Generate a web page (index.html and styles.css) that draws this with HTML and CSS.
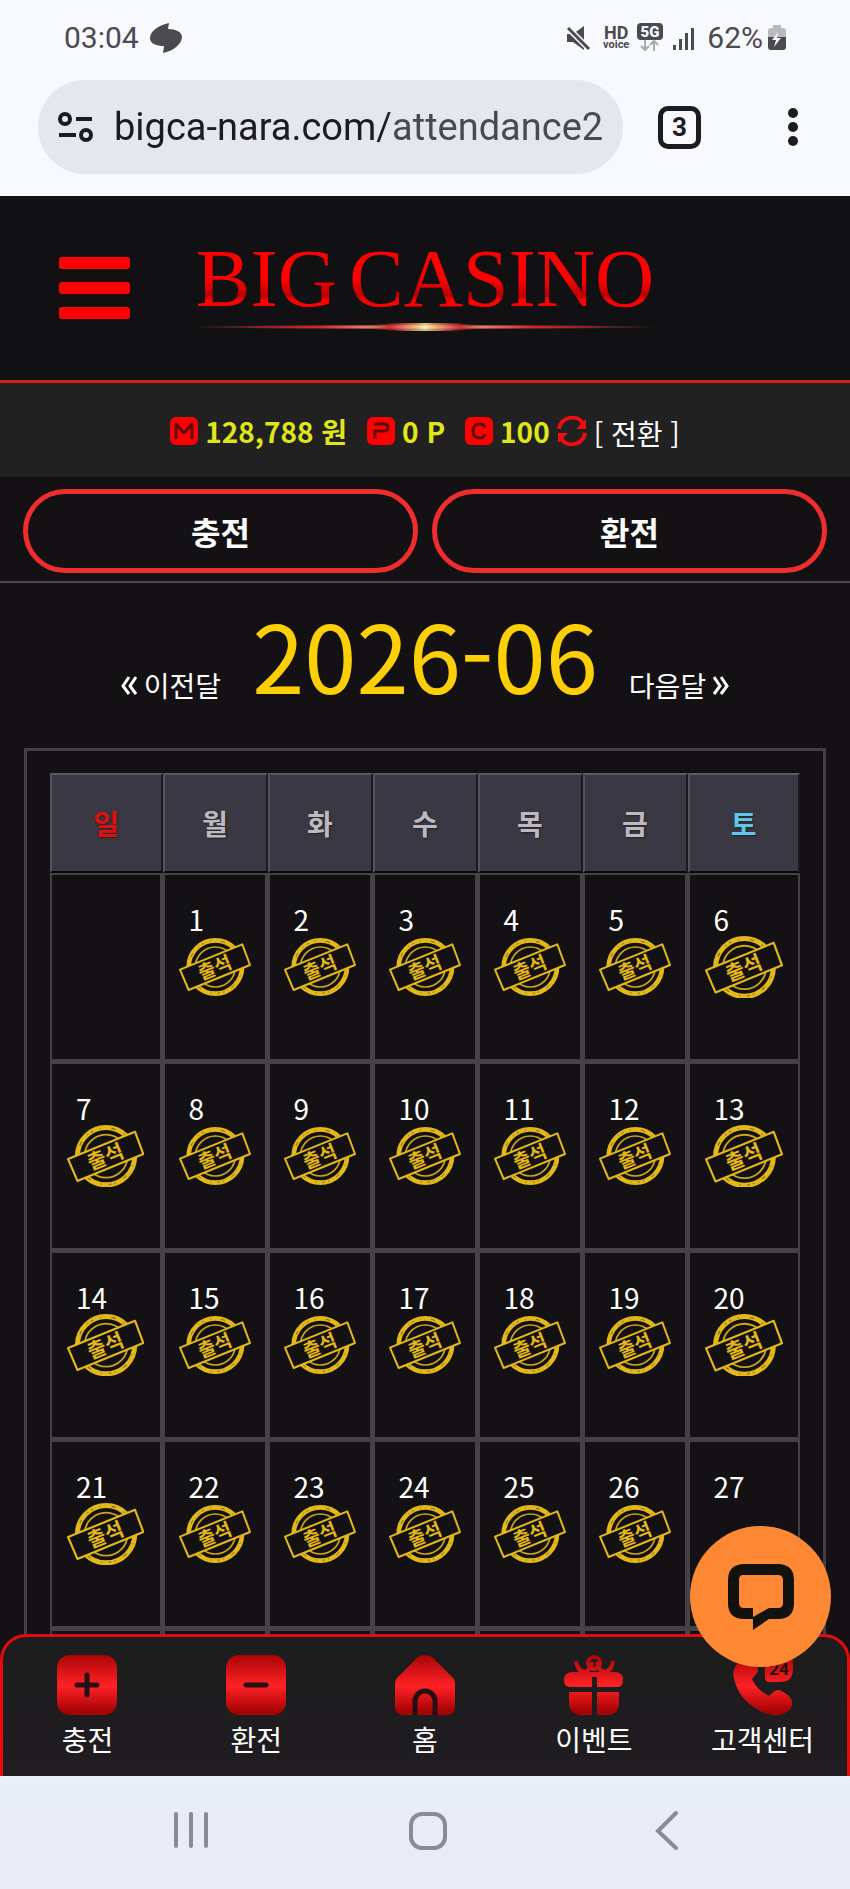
FILE: index.html
```html
<!DOCTYPE html>
<html lang="ko">
<head>
<meta charset="utf-8">
<meta name="viewport" content="width=device-width, initial-scale=1">
<title>BIG CASINO</title>
<link rel="stylesheet" href="styles.css">
</head>
<body>
<svg class="defs" aria-hidden="true">
  <defs>
    <linearGradient id="red" gradientUnits="userSpaceOnUse" x1="0" y1="0" x2="0" y2="60">
      <stop offset="0" stop-color="#a90506"/><stop offset=".52" stop-color="#ff2226"/><stop offset=".95" stop-color="#a50204"/>
    </linearGradient>
    <symbol id="stamp" viewBox="0 0 216 174">
      <circle cx="109" cy="87" r="80" fill="none" stroke="#e3b81a" stroke-width="14"/>
      <circle cx="109" cy="87" r="79" fill="none" stroke="#7d6616" stroke-width="3" stroke-dasharray="7 19 3 31 12 24 4 9"/>
      <circle cx="109" cy="87" r="60" fill="none" stroke="#cda51b" stroke-width="5"/>
      <path d="M3 95 190 19 213 81 29 156Z" fill="#131113" stroke="#e3b81a" stroke-width="6" stroke-linejoin="round"/>
      <text x="107" y="108" transform="rotate(-22 109 87)" text-anchor="middle" class="stamp-text">출석</text>
    </symbol>
  </defs>
</svg>

<div class="phone">
  <header class="status">
    <div class="clock">
      <span>03:04</span>
      <svg width="32" height="30" viewBox="0 0 32 30" fill="#4b4a51"><path d="M19 0C9 2 0 8 0 15c0 6 7 8 14 8l-1 7c10-2 19-9 19-16 0-5-6-8-14-8z"/></svg>
    </div>
    <div class="signals">
      <svg width="24" height="32" viewBox="0 0 24 32" fill="#4b4a51"><path d="M0 12h6l11-8v24L6 20H0z"/><path d="M0 5 23 28" stroke="#f8f8ff" stroke-width="6"/><path d="M1 6 22 27" stroke="#4b4a51" stroke-width="3"/></svg>
      <span class="hd-voice"><b>HD</b><small>voice</small></span>
      <svg width="58" height="32" viewBox="0 0 58 32" fill="#4b4a51">
        <rect width="26" height="17" y="1" rx="4"/>
        <text x="13" y="15" class="five" text-anchor="middle">5G</text>
        <path d="M8 18v10m-4-4 4 4 4-4M17 29V19m-4 4 4-4 4 4" fill="none" stroke="#a9a9b0" stroke-width="2"/>
        <path d="M36 23h3v5h-3zM42 17h3v11h-3zM48 11h3v17h-3zM54 6h3v22h-3z"/>
      </svg>
      <span class="percent">62%</span>
      <svg width="18" height="26" viewBox="0 0 18 26"><path d="M5 0h8v3h2q3 0 3 3v7H0V6q0-3 3-3h2z" fill="#b9b9c0"/><path d="M0 12h18v10q0 3-3 3H3q-3 0-3-3z" fill="#4b4a51"/><path d="M10 7 4 15h4l-2 7 7-9H9z" fill="#f8f8ff"/></svg>
    </div>
  </header>

  <div class="browser">
    <div class="address">
      <svg width="36" height="30" viewBox="0 0 36 30" fill="none" stroke="#1b1b20" stroke-width="4"><circle cx="7" cy="7" r="5"/><path d="M18 7h16M1 23h17"/><circle cx="28" cy="23" r="5"/></svg>
      <input class="url" aria-label="URL" value="bigca-nara.com/attendance2">
    </div>
    <button class="tabs" aria-label="Tabs">3</button>
    <button class="more" aria-label="Menu"><svg width="10" height="38" viewBox="0 0 10 38" fill="#1b1b20"><circle cx="5" cy="5" r="5"/><circle cx="5" cy="19" r="5"/><circle cx="5" cy="33" r="5"/></svg></button>
  </div>

  <div class="page">
    <div class="scroll">
      <header class="site-header">
        <button class="menu" aria-label="메뉴"><i></i><i></i><i></i></button>
        <a class="logo" href="#">
          <span class="logo-text"><span>BIG</span><span>CASINO</span></span>
          <svg viewBox="0 0 460 12" aria-hidden="true">
            <defs>
              <linearGradient id="line"><stop offset="0" stop-color="#8a4444" stop-opacity="0"/><stop offset=".2" stop-color="#b81c20"/><stop offset=".33" stop-color="#ec6a62"/><stop offset=".42" stop-color="#f0b070"/><stop offset=".5" stop-color="#fff0b8"/><stop offset=".58" stop-color="#f0b070"/><stop offset=".67" stop-color="#ec6a62"/><stop offset=".8" stop-color="#b81c20"/><stop offset="1" stop-color="#8a4444" stop-opacity="0"/></linearGradient>
            </defs>
            <rect y="5" width="460" height="2" fill="url(#line)"/>
            <rect x="50" y="4" width="360" height="4" fill="url(#line)" opacity=".6"/>
            <ellipse cx="230" cy="6" rx="60" ry="4" fill="url(#line)" opacity=".8"/>
          </svg>
        </a>
      </header>

      <div class="balance">
        <svg class="badge" viewBox="0 0 28 28"><rect width="28" height="28" rx="6" fill="#f00"/><path d="M6 22V7l8 9 8-9v15" fill="none" stroke="#5c0c0c" stroke-width="3" stroke-linejoin="round"/></svg>
        <b class="won">128,788 원</b>
        <svg class="badge" viewBox="0 0 28 28"><rect width="28" height="28" rx="6" fill="#f00"/><path d="M8 22V14h9q4 0 4-4 0-3-4-3H7" fill="none" stroke="#5c0c0c" stroke-width="3"/></svg>
        <b class="won">0 P</b>
        <svg class="badge" viewBox="0 0 28 28"><rect width="28" height="28" rx="6" fill="#f00"/><path d="M20 11q-1-4-5-4-7 0-7 7t7 7q4 0 5-4" fill="none" stroke="#5c0c0c" stroke-width="3"/></svg>
        <b class="coin">100</b>
        <svg class="refresh" viewBox="0 0 30 30" fill="none" stroke="#ee0d10" stroke-width="4"><path d="M2 13C4 0 22-2 26 8M28 17C26 30 8 32 4 22"/><path d="M29 3v10h-10zM1 27v-10h10z" fill="#ee0d10" stroke="none"/></svg>
        <a class="convert" href="#">[ 전환 ]</a>
      </div>

      <div class="cash">
        <button>충전</button>
        <button>환전</button>
      </div>

      <div class="month">
        <a href="#"><svg width="16" height="20" viewBox="0 0 16 20"><path d="M8 2 2 11l6 8M15 2 9 11l6 8"/></svg>이전달</a>
        <h1>2026-06</h1>
        <a href="#">다음달<svg width="16" height="20" viewBox="0 0 16 20"><path d="m1 2 6 9-6 8M8 2l6 9-6 8"/></svg></a>
      </div>

      <div class="box">
        <table class="calendar">
          <thead>
            <tr><th class="sun">일</th><th>월</th><th>화</th><th>수</th><th>목</th><th>금</th><th class="sat">토</th></tr>
          </thead>
          <tbody>
            <tr>
              <td></td>
              <td><div class="day"><span>1</span><svg viewBox="0 0 216 174"><use href="#stamp"/></svg></div></td>
              <td><div class="day"><span>2</span><svg viewBox="0 0 216 174"><use href="#stamp"/></svg></div></td>
              <td><div class="day"><span>3</span><svg viewBox="0 0 216 174"><use href="#stamp"/></svg></div></td>
              <td><div class="day"><span>4</span><svg viewBox="0 0 216 174"><use href="#stamp"/></svg></div></td>
              <td><div class="day"><span>5</span><svg viewBox="0 0 216 174"><use href="#stamp"/></svg></div></td>
              <td><div class="day"><span>6</span><svg viewBox="0 0 216 174"><use href="#stamp"/></svg></div></td>
            </tr>
            <tr>
              <td><div class="day"><span>7</span><svg viewBox="0 0 216 174"><use href="#stamp"/></svg></div></td>
              <td><div class="day"><span>8</span><svg viewBox="0 0 216 174"><use href="#stamp"/></svg></div></td>
              <td><div class="day"><span>9</span><svg viewBox="0 0 216 174"><use href="#stamp"/></svg></div></td>
              <td><div class="day"><span>10</span><svg viewBox="0 0 216 174"><use href="#stamp"/></svg></div></td>
              <td><div class="day"><span>11</span><svg viewBox="0 0 216 174"><use href="#stamp"/></svg></div></td>
              <td><div class="day"><span>12</span><svg viewBox="0 0 216 174"><use href="#stamp"/></svg></div></td>
              <td><div class="day"><span>13</span><svg viewBox="0 0 216 174"><use href="#stamp"/></svg></div></td>
            </tr>
            <tr>
              <td><div class="day"><span>14</span><svg viewBox="0 0 216 174"><use href="#stamp"/></svg></div></td>
              <td><div class="day"><span>15</span><svg viewBox="0 0 216 174"><use href="#stamp"/></svg></div></td>
              <td><div class="day"><span>16</span><svg viewBox="0 0 216 174"><use href="#stamp"/></svg></div></td>
              <td><div class="day"><span>17</span><svg viewBox="0 0 216 174"><use href="#stamp"/></svg></div></td>
              <td><div class="day"><span>18</span><svg viewBox="0 0 216 174"><use href="#stamp"/></svg></div></td>
              <td><div class="day"><span>19</span><svg viewBox="0 0 216 174"><use href="#stamp"/></svg></div></td>
              <td><div class="day"><span>20</span><svg viewBox="0 0 216 174"><use href="#stamp"/></svg></div></td>
            </tr>
            <tr>
              <td><div class="day"><span>21</span><svg viewBox="0 0 216 174"><use href="#stamp"/></svg></div></td>
              <td><div class="day"><span>22</span><svg viewBox="0 0 216 174"><use href="#stamp"/></svg></div></td>
              <td><div class="day"><span>23</span><svg viewBox="0 0 216 174"><use href="#stamp"/></svg></div></td>
              <td><div class="day"><span>24</span><svg viewBox="0 0 216 174"><use href="#stamp"/></svg></div></td>
              <td><div class="day"><span>25</span><svg viewBox="0 0 216 174"><use href="#stamp"/></svg></div></td>
              <td><div class="day"><span>26</span><svg viewBox="0 0 216 174"><use href="#stamp"/></svg></div></td>
              <td><div class="day"><span>27</span></div></td>
            </tr>
            <tr><td></td><td></td><td></td><td></td><td></td><td></td><td></td></tr>
          </tbody>
        </table>
      </div>
    </div>

    <nav class="dock">
      <a href="#"><svg viewBox="0 0 60 60"><rect width="60" height="60" rx="13" fill="url(#red)"/><path d="M30 20v20M20 30h20" stroke="#241012" stroke-width="5" stroke-linecap="round"/></svg>충전</a>
      <a href="#"><svg viewBox="0 0 60 60"><rect width="60" height="60" rx="13" fill="url(#red)"/><path d="M20 30h20" stroke="#241012" stroke-width="5" stroke-linecap="round"/></svg>환전</a>
      <a href="#"><svg viewBox="0 0 60 60"><path d="M23 2q7-4 14 0l21 21q2 2 2 5v23q0 9-9 9H9q-9 0-9-9V28q0-3 2-5z" fill="url(#red)"/><path d="M20 61V46a10 10 0 0 1 20 0v15" fill="none" stroke="#241012" stroke-width="5"/></svg>홈</a>
      <a href="#"><svg viewBox="0 0 60 60"><path d="M9 17h42q8 0 8 8 0 7-5 7H33V22h-5v10H6q-6 0-6-7 0-8 9-8zM5 37h23v23H18Q5 60 5 47zM33 37h22v10q0 13-12 13H33z" fill="url(#red)"/><path d="M12 6q1 9 8 11 8-2 8-10M49 6q-1 9-8 11-8-2-8-10" fill="none" stroke="url(#red)" stroke-width="4"/><circle cx="30" cy="8" r="6" fill="none" stroke="url(#red)" stroke-width="4"/></svg>이벤트</a>
      <a href="#"><svg viewBox="0 0 60 60"><path d="M9 4Q-2 13 1 23q4 22 28 34 14 6 23 1 8-4 7-11 0-3-3-6-7-6-11-6-3 0-6 3l-3 3q-12-6-17-17l5-6q2-3 0-6L17 4q-4-3-8 0z" fill="url(#red)"/><path d="M36 1h17q7 0 7 7v6q0 13-13 13H36q-4 0-4-4V5q0-4 4-4z" fill="url(#red)"/><text x="46" y="20" text-anchor="middle" class="hours">24</text></svg>고객센터</a>
    </nav>

    <button class="chat" aria-label="채팅"><svg viewBox="0 0 66 66"><path d="M15 0h36q15 1 15 16v23q0 16-16 16h-9L25 66V55h-9Q0 55 0 39V16Q0 1 15 0zm0 11q-4 0-4 5v23q0 5 5 5h9v9l16-9h9q5 0 5-5V16q0-5-5-5z" fill="#12120f" fill-rule="evenodd"/></svg></button>
  </div>

  <footer class="system">
    <button aria-label="최근 앱"><svg width="40" height="40" viewBox="0 0 40 40"><path d="M5 4v32M20 4v32M35 4v32"/></svg></button>
    <button aria-label="홈 화면"><svg width="40" height="40" viewBox="0 0 40 40"><rect x="2" y="4" width="34" height="34" rx="11"/></svg></button>
    <button aria-label="뒤로"><svg width="40" height="40" viewBox="0 0 40 40"><path d="M30 3 12 21l18 17"/></svg></button>
  </footer>
</div>
</body>
</html>
```
FILE: styles.css
```css
* { box-sizing: border-box; }

body {
  margin: 0;
  background: #131113;
  color: #fff;
  font: 28px/40px "Noto Sans CJK KR", "Noto Sans", sans-serif;
}

a { color: inherit; text-decoration: none; }
button { margin: 0; padding: 0; border: 0; background: none; color: inherit; font: inherit; }
svg { display: block; flex: none; }
.defs { position: absolute; width: 0; height: 0; }

.phone { display: flex; flex-direction: column; height: 100vh; overflow: hidden; }

/* Status bar */
.status {
  display: flex;
  justify-content: space-between;
  align-items: center;
  padding: 0 64px;
  height: 76px;
  background: #f8f8ff;
  color: #4b4a51;
  font: 30px/36px Roboto, sans-serif;
}
.clock, .signals { display: flex; align-items: center; }
.clock { gap: 11px; }
.hd-voice { display: flex; flex-direction: column; align-items: center; margin: 0 8px 0 12px; }
.hd-voice b { font-size: 18px; line-height: 14px; }
.hd-voice small { font-size: 11px; font-weight: 700; line-height: 10px; }
.five { font: 900 15px Roboto, sans-serif; fill: #f8f8ff; }
.percent { margin: 0 5px 0 12px; }

/* Browser bar */
.browser {
  display: flex;
  align-items: center;
  padding: 4px 52px 22px 38px;
  background: #f8f8ff;
}
.address {
  display: flex;
  flex: 1;
  align-items: center;
  gap: 20px;
  min-width: 0;
  height: 94px;
  padding: 0 18px 0 20px;
  border-radius: 47px;
  background: #e5e7ee;
}
.url {
  flex: 1;
  min-width: 0;
  height: 60px;
  padding: 0;
  border: 0;
  background: linear-gradient(90deg, #1b1b20 270px, #474a50 282px);
  background-clip: text;
  -webkit-background-clip: text;
  color: transparent;
  font: 38px Roboto, sans-serif;
}
.tabs {
  flex: none;
  width: 43px;
  height: 43px;
  margin: 0 87px 0 35px;
  border: 5px solid #1b1b20;
  border-radius: 10px;
  color: #1b1b20;
  font: 700 26px/32px Roboto, sans-serif;
}

/* Site */
.page { position: relative; flex: 1; min-height: 0; }
.scroll { height: 100%; overflow: hidden; }

.site-header {
  display: grid;
  grid-template-columns: 1fr 460px 1fr;
  align-items: center;
  height: 187px;
  padding: 0 59px;
  border-bottom: 3px solid #d3201f;
  background: #111113;
}
.menu { display: flex; flex-direction: column; gap: 13px; width: 71px; }
.menu i { height: 12px; border-radius: 3px; background: #f00; }
.logo { display: grid; gap: 4px; padding-bottom: 2px; }
.logo-text {
  display: flex;
  justify-content: center;
  gap: 12px;
  background: linear-gradient(#f00 50%, #b80000 72%, #f00 78%);
  background-clip: text;
  -webkit-background-clip: text;
  color: transparent;
  font: 82px/76px "Liberation Serif", serif;
}

.balance {
  display: flex;
  align-items: center;
  justify-content: center;
  height: 94px;
  padding-top: 2px;
  background: #222122;
}
.badge { width: 28px; height: 28px; margin-right: 7px; }
.won, .coin { color: #dfe619; }
.won { margin-right: 20px; }
.refresh { width: 30px; height: 30px; margin: 0 7px; }
.convert { padding-top: 4px; }

.cash {
  display: grid;
  grid-template-columns: 1fr 1fr;
  gap: 14px;
  padding: 12px 23px 8px;
  border-bottom: 2px solid #4a484a;
}
.cash button {
  height: 84px;
  border: 5px solid #ee2d2f;
  border-radius: 42px;
  font-size: 32px;
  font-weight: 700;
}

.month {
  display: flex;
  justify-content: center;
  align-items: end;
  gap: 31px;
  margin-bottom: 25px;
}
.month h1 { margin: 0; color: #ffcf06; font-size: 94px; font-weight: 400; line-height: 140px; }
.month a { display: flex; align-items: center; gap: 7px; padding-bottom: 18px; }
.month path { fill: none; stroke: #fff; stroke-width: 3; }

.box { margin: 0 24px; padding: 22px 23px; border: 3px solid #424042; }
.calendar { width: 100%; table-layout: fixed; border-spacing: 0; }
.calendar th {
  height: 100px;
  padding: 0;
  border: 2px solid;
  border-color: #5b5a60 #1b191f #08080a #55535a;
  background: #3a3842;
  color: #bdb9c1;
  text-shadow: 1px 1px 2px #222;
  width: 14%;
}
.calendar th:first-child, .calendar th:last-child { width: 15%; }
.calendar .sun { color: #e20f12; }
.calendar .sat { color: #62c5ee; }
.calendar td {
  height: 189px;
  padding: 0;
  border: solid #444244;
  border-width: 2px 3px 3px 2px;
}
.calendar td:last-child { border-right-width: 2px; }
.day { display: grid; height: 184px; }
.day > * { grid-area: 1 / 1; }
.day span { padding: 24px 0 0 24px; }
.day svg { width: 72%; place-self: center; }
.stamp-text { font: 700 56px "Noto Sans CJK KR", sans-serif; fill: #e3b81a; }

/* Bottom dock */
.dock {
  position: absolute;
  right: 0;
  bottom: 0;
  left: 0;
  display: grid;
  grid-template-columns: repeat(5, 1fr);
  padding: 18px 0 17px;
  border: 3px solid #e60a0d;
  border-bottom: 0;
  border-radius: 26px 26px 0 0;
  background: linear-gradient(#1c1d1c, #201c21);
}
.dock a { display: flex; flex-direction: column; align-items: center; gap: 4px; }
.dock svg { width: 60px; height: 60px; }
.hours { font: 700 17px Roboto, sans-serif; fill: #241012; }

.chat {
  position: absolute;
  right: 19px;
  bottom: 109px;
  display: grid;
  place-items: center;
  width: 141px;
  height: 141px;
  border-radius: 50%;
  background: #ff8834;
}
.chat svg { width: 66px; height: 66px; }

/* System bar */
.system {
  display: flex;
  justify-content: space-between;
  padding: 34px 164px 39px 171px;
  background: linear-gradient(#e7eff9, #eaebf6 60%);
}
.system svg { fill: none; stroke: #898c96; stroke-width: 4; stroke-linecap: round; }
```
